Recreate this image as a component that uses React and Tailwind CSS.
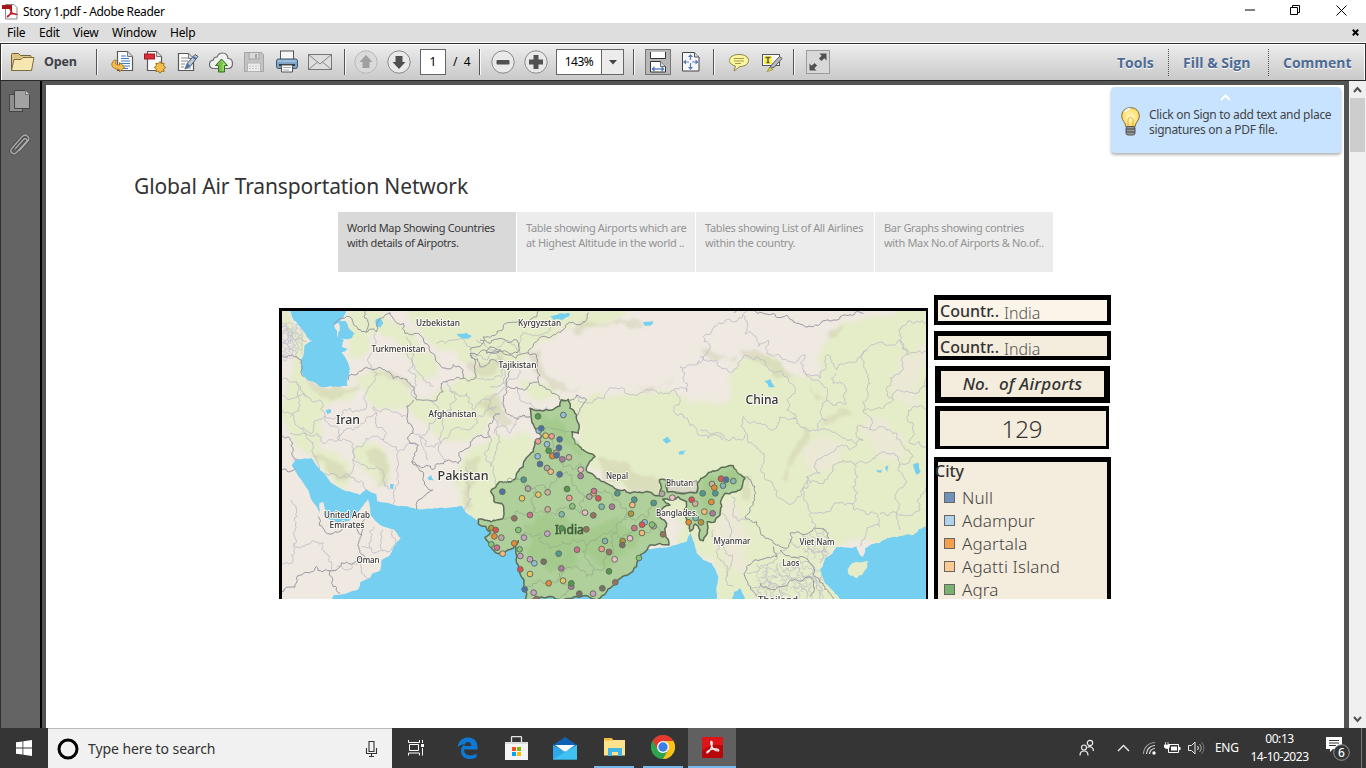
import React from "react";

/* ---------- map geometry helpers ---------- */

function rand(seed) {
  let s = seed % 2147483647;
  return () => {
    s = (s * 48271) % 2147483647;
    return s / 2147483647 - 0.5;
  };
}

// Turns a coarse "x,y x,y" outline into a rough, natural looking border.
function rough(str, amp = 0.3, close = false, dx = 0) {
  const pts = str.trim().split(/\s+/).map((p) => p.split(",").map(Number));
  if (close) pts.push(pts[0]);
  const r = rand(Math.abs(Math.round(pts[0][0] * 37 + pts[0][1] * 91 + pts.length * 13)) + 7);
  const out = [pts[0]];
  const sub = (a, b) => {
    const d = Math.hypot(b[0] - a[0], b[1] - a[1]);
    if (d < 9) {
      out.push(b);
      return;
    }
    const k = r() * amp;
    const m = [(a[0] + b[0]) / 2 - (b[1] - a[1]) * k, (a[1] + b[1]) / 2 + (b[0] - a[0]) * k];
    sub(a, m);
    sub(m, b);
  };
  for (let i = 1; i < pts.length; i++) sub(pts[i - 1], pts[i]);
  return "M" + out.map((p) => (p[0] + dx).toFixed(1) + " " + p[1].toFixed(1)).join("L") + (close ? "Z" : "");
}

const W = 0;
const M = 600;
const E = 1290;

const GREEN = [
  [W, "30,33 60,33 110,110 95,180 110,240 180,270 260,265 240,300 170,320 150,360 160,400 130,440 90,440 60,400 30,330"],
  [W, "240,235 310,205 410,240 430,290 480,300 560,240 600,230 660,200 690,230 690,330 640,400 560,420 440,360 410,330 360,330 290,290"],
  [W, "235,33 330,33 400,80 440,110 480,160 500,230 440,240 410,170 350,110 300,100 280,170 240,180 232,120"],
  [W, "400,33 700,33 700,170 640,200 580,190 540,150 480,130 450,90"],
  [W, "60,390 120,390 150,440 220,480 240,540 220,570 170,520 130,470 70,430"],
  [W, "250,440 320,430 350,470 360,530 330,560 300,520 250,480"],
  [W, "600,450 690,420 700,660 620,660 575,617 560,560 580,480"],
  [M, "0,33 350,33 350,60 280,85 200,130 170,170 100,230 60,290 0,330"],
  [M, "350,33 470,33 430,60 330,80"],
  [M, "150,240 230,250 330,300 480,280 600,270 690,330 690,700 560,600 350,500 330,380 300,300 200,300"],
  [M, "0,440 80,400 180,400 200,430 150,500 110,550 60,570 90,640 90,660 0,660"],
  [E, "420,70 600,33 720,0 720,690 540,740 400,740 360,800 420,940 60,940 40,780 -60,760 -60,330 90,290 110,190 200,170 260,220 360,230 370,130"],
];
const PALE = [
  [E, "300,440 400,420 450,440 400,500 330,510"],
  [E, "500,350 590,400 620,470 560,480 500,410"],
  [E, "600,170 680,130 680,330 600,300 580,240"],
  [E, "60,600 110,620 150,700 130,820 80,790 40,690"],
];
const HILL = [
  [W, "110,225 160,260 235,270 270,262 215,290 180,300 130,270"],
  [W, "290,455 330,450 355,500 350,560 320,560 330,510"],
  [W, "590,480 630,470 620,520 600,570 605,610 590,630 585,560"],
  [W, "290,210 360,205 400,235 425,270 380,240 320,225"],
  [W, "590,190 690,150 690,200 620,225"],
  [W, "640,300 690,290 690,330 650,335"],
  [W, "130,470 180,480 240,530 220,545 170,510"],
  [M, "170,160 210,150 220,200 260,240 330,260 300,275 240,260 200,220"],
  [M, "300,90 350,60 450,55 520,80 480,85 400,75 330,105"],
  [M, "40,300 100,330 130,370 110,380 60,350 20,310"],
  [M, "380,475 480,500 570,545 565,585 470,570 400,540"],
  [M, "500,250 560,260 610,235 600,255 540,275"],
  [E, "120,150 190,160 280,225 270,235 200,200 140,175"],
  [E, "310,380 328,400 322,430 290,470 265,540 255,550 262,490 290,440"],
  [E, "0,145 60,170 110,165 100,185 40,180"],
  [E, "330,250 380,300 350,300"],
  [E, "385,350 450,335 480,350 410,360 370,380"],
  [E, "130,540 155,530 150,600 135,600"],
  [E, "380,105 430,75 410,110"],
];
const SEA = [
  [W, "60,33 70,10 228,10 228,33 192,75 203,110 222,120 216,140 234,146 214,158 228,176 232,258 165,262 100,230 92,180 105,135 130,124 110,110 85,75"],
  [W, "205,66 225,62 238,88 255,100 245,115 205,113"],
  [W, "65,498 80,478 125,475 150,510 180,545 225,572 270,585 290,568 318,582 322,604 370,615 445,628 575,617 590,640 625,662 780,680 1000,760 1200,740 1250,725 1262,698 1280,760 1300,780 1325,790 1345,830 1340,900 1340,1250 185,1250 185,900 192,885 265,868 272,845 300,835 308,820 330,812 335,780 358,768 392,715 370,688 330,675 302,645 294,598 270,630 238,662 205,670 168,655 160,605 148,610 150,640 128,605 115,570 95,540"],
  [E, "95,897 103,875 120,865 135,897 135,920 95,920"],
  [E, "700,672 680,675 640,705 590,712 540,728 495,745 490,770 480,765 470,740 410,740 375,775 360,810 375,850 425,900 430,1100 700,1100"],
  [W, "318,58 330,54 340,68 332,82 320,80"],
  [W, "560,102 590,98 606,108 590,116 565,108"],
  [W, "167,330 180,326 183,338 172,343"],
  [W, "472,535 483,525 492,542 478,541"],
  [W, "360,553 372,552 370,568 362,566"],
  [M, "240,48 298,39 300,47 275,60 250,60"],
  [M, "518,68 548,62 547,73 525,78"],
  [M, "578,420 592,410 604,424 590,431"],
  [M, "626,456 648,451 640,464 628,464"],
  [E, "193,243 210,238 225,262 205,260"],
  [E, "528,512 546,510 543,518"],
  [E, "555,502 565,496 562,516"],
  [E, "640,492 655,488 662,515 650,524"],
];
const THIN = [
  [W, "30,80 60,90 80,120 110,125"],
  [W, "30,130 70,150 90,190"],
  [W, "30,240 80,245 110,290 150,300 165,350 120,400 90,385 60,340 30,320"],
  [W, "80,250 90,300 60,350"],
  [W, "110,290 60,300 30,285"],
  [W, "165,350 215,345 240,325 290,320 310,205"],
  [W, "90,385 140,400 165,430 205,420 200,380 165,350"],
  [W, "205,420 215,400 280,370 320,340 310,320 360,330 410,350"],
  [W, "205,420 250,450 250,500 220,530 160,520 130,440 60,400"],
  [W, "250,450 340,420 385,455 385,490 375,560 370,615"],
  [W, "385,455 440,430"],
  [W, "320,340 350,400 340,420"],
  [W, "220,530 280,560 300,580"],
  [W, "360,570 320,500 250,450"],
  [W, "315,100 320,150 305,205"],
  [W, "410,110 425,180 440,300"],
  [W, "410,150 490,260"],
  [W, "430,400 470,440 540,400 600,390 620,350 680,320"],
  [W, "480,300 500,350 470,400 475,480"],
  [W, "540,270 545,330 520,380 530,480"],
  [W, "530,240 590,280 610,330 660,300"],
  [W, "500,130 550,120 600,140 620,170"],
  [W, "585,630 600,560 590,500"],
  [W, "65,600 70,700 65,790 30,800"],
  [W, "70,730 160,730 185,790 190,810"],
  [W, "275,740 355,755 365,690"],
  [W, "310,680 305,745"],
  [W, "340,690 338,750"],
  [W, "200,800 270,790 300,835"],
  [W, "70,480 90,520 150,630"],
  [M, "20,120 60,150 100,130 150,160 170,100 250,80"],
  [M, "10,160 50,180 80,160 110,200 60,240 10,230"],
  [M, "100,200 110,260 60,300 80,380 70,400"],
  [M, "140,260 150,290 190,320 230,320"],
  [M, "60,260 110,250 150,210"],
  [M, "320,290 370,305 480,285 550,270 610,270"],
  [M, "610,270 650,275 640,230 630,200 690,180"],
  [M, "610,270 615,340 680,385 760,420"],
  [M, "680,190 700,110 760,70 830,33"],
  [M, "60,410 70,500 80,560"],
  [M, "180,350 120,400 90,380 80,440 60,500"],
  [E, "130,45 135,100 175,140 205,120 215,165 270,185 315,165 310,210 360,235 385,165 410,210 440,190 500,150 600,120 605,80 650,65 680,70"],
  [E, "0,170 60,200 110,205 130,170 190,180 260,230 285,280 260,330 290,350 240,350 220,390 150,370 130,350 140,400 120,420 60,400 0,390"],
  [E, "310,210 350,240 380,300 440,310 440,270 400,250 405,220"],
  [E, "500,150 510,250 490,330 580,300 600,120"],
  [E, "490,330 510,390 470,380 490,420 440,420 390,390 350,390 280,350"],
  [E, "510,390 590,400 620,450 640,470 600,495"],
  [E, "380,300 380,360 350,390"],
  [E, "580,300 590,270 650,280 680,230"],
  [E, "600,120 630,160 680,155"],
  [E, "620,350 640,320 680,330"],
  [E, "620,350 640,390 630,430 680,440"],
  [E, "140,400 170,440 180,510 215,545 250,600 300,590 320,530 360,520 350,480 390,460 450,450 470,430"],
  [E, "320,530 330,550 460,490 600,490 610,530 585,590 590,640"],
  [E, "460,490 465,540 450,610 340,640 310,600 325,540"],
  [E, "450,610 530,640 540,680 480,740"],
  [E, "590,640 660,630 670,580 680,560"],
  [E, "540,640 590,640 600,690"],
  [E, "330,640 345,690 380,690"],
  [E, "60,640 90,680 70,740 90,800 100,860"],
  [E, "95,590 100,650 140,660"],
  [E, "40,690 50,760 80,830"],
  [E, "140,820 180,800 220,790 260,750"],
  [E, "150,860 200,840 240,860 250,897"],
  [E, "200,800 210,850 190,897"],
  [E, "230,790 250,830 300,850 320,897"],
  [E, "260,810 290,800 310,830 350,850 360,897"],
  [E, "265,720 300,740 310,710 360,720 380,760"],
  [E, "320,730 340,760 370,750 360,790"],
  [E, "280,770 330,790 345,820"],
];
const THICK = [
  [W, "192,75 215,55 245,55 275,95 320,95 330,55 360,38 400,70 405,100 450,105 480,155 580,210 580,235 550,240 520,245 520,275 470,300 440,300 430,260 400,235 350,215 300,205 235,240"],
  [W, "430,300 412,345 420,430 445,435 425,485 450,500 520,492 565,490 570,455 600,440 610,415 660,410 670,350 690,340"],
  [W, "425,485 460,530 470,560 488,570 445,600 440,628"],
  [W, "580,235 615,235 615,180 600,160 640,150 690,150"],
  [W, "30,170 80,170 100,230"],
  [W, "30,400 60,415 65,460 80,478"],
  [W, "30,510 60,515 75,505"],
  [W, "30,880 100,820 180,812 285,775 275,705 165,695 145,650"],
  [W, "180,812 210,880"],
  [W, "275,705 278,665 295,640"],
  [W, "286,33 288,95"],
  [M, "0,150 30,140 40,110 100,75 170,70 200,50 330,33"],
  [M, "355,38 345,65 280,90 200,125 175,160 200,165 210,225 205,245 115,260 100,300 110,340 180,350"],
  [M, "30,120 60,130 90,115 130,120 150,150 110,155 60,140 50,160 100,160 175,160"],
  [M, "205,245 240,270 270,300 320,285 350,300 325,345"],
  [M, "110,260 115,200 90,190 60,180 30,200 0,165"],
  [E, "103,38 200,42 260,45 290,70 340,80 400,60 490,40"],
  [E, "130,530 165,560 165,600 135,650 170,665 180,690 220,730 260,745 270,700 310,705 350,685 385,700 390,735"],
  [E, "220,740 230,770 180,780 140,800 135,830 170,890"],
  [E, "240,750 300,770 340,800 340,820 390,880 400,897"],
  [E, "180,850 240,860 270,840 330,830 340,860 330,890"],
];
const INDIA =
  "180,325 230,328 270,318 275,300 295,298 300,325 320,345 325,400 305,395 315,430 375,470 350,515 410,550 480,580 570,588 568,540 588,540 592,576 620,580 680,578 682,552 710,525 750,505 790,497 800,515 825,535 815,565 765,580 755,620 735,665 712,665 712,690 700,722 690,720 690,690 675,672 660,694 650,660 640,640 650,605 625,590 605,600 578,598 600,615 565,632 590,670 597,735 540,735 500,800 440,850 410,875 380,900 168,900 150,820 145,722 130,745 98,768 62,740 45,712 62,698 25,672 25,658 100,655 95,610 72,605 62,575 90,545 130,540 160,500 165,480 190,455 195,425 215,410 200,392 185,360";
const STATES = [
  "200,395 240,385 280,395 300,395",
  "215,410 250,440 280,500 330,490 350,515",
  "90,545 180,560 240,560 270,520 280,500",
  "180,560 190,620 230,640 280,625 330,640 350,590 320,560 270,520",
  "100,655 190,620",
  "145,700 210,700 260,740 350,735 400,700 440,700 470,640 430,600 350,590",
  "470,640 540,640 560,600",
  "440,700 500,690 580,700",
  "350,735 370,800 350,830 280,810 200,850 160,860",
  "440,700 430,760 370,810",
  "280,810 300,860 260,897",
];

const C = {
  b: "#4a74a8", l: "#8fbedb", o: "#ea8a32", p: "#f5b97a", g: "#4f9c47", h: "#83c773", y: "#b09a33", w: "#e9c75c",
  t: "#4c9a90", a: "#80b8b0", r: "#dc5352", s: "#f39a90", d: "#7b7067", e: "#b3a9a2", k: "#d16f8c", i: "#eebccb",
  v: "#ab7a9e", u: "#c9a2c5", n: "#98725c", m: "#ceb09b",
};
const DOTS =
  "204,349,g 280,345,l 206,392,l 214,385,b 227,407,w 245,409,s 269,418,b 204,424,s 231,433,l 267,443,b 236,452,g 259,458,e 247,468,o 260,466,b 203,469,l 277,478,v 297,472,m 210,492,b 231,504,e 242,515,p 269,523,b 332,509,i 332,528,v 161,539,t 97,575,b 174,566,e 205,584,w 156,595,w 233,577,m 291,567,g 298,594,s 371,580,p 372,573,k 358,590,e 385,595,r 442,580,t 307,619,h 395,620,a 426,620,v 493,599,t 487,615,p 551,609,t 483,641,y 233,628,m 275,643,a 345,638,i 370,646,n 180,645,k 133,655,n 64,684,y 77,690,r 73,709,o 94,713,e 145,690,h 64,733,h 81,743,k 98,761,p 133,730,o 162,713,u 232,701,u 275,685,g 349,688,n 493,684,k 524,667,l 516,674,r 551,679,e 546,674,h 516,699,p 579,703,n 480,715,i 405,723,a 458,723,y 457,735,d 395,747,s 417,756,n 434,778,i 507,774,h 417,814,g 436,847,n 397,865,d 369,881,u 328,881,d 304,860,v 304,850,g 279,842,w 236,850,o 274,805,v 266,761,t 321,749,k 221,785,d 193,790,l 180,778,u 149,748,h 151,768,u 151,808,r 180,822,w 164,868,b 191,878,u 200,897,n 576,581,e 607,593,i 665,599,r 676,611,m 698,580,t 703,635,p 677,654,a 656,667,o 693,667,y 753,536,r 768,539,b 790,543,a 726,552,m 733,563,o 759,557,a 736,580,t 724,606,o 728,640,v".split(" ").map((s) => s.split(","));

const LABELS = [
  ["Uzbekistan", 438, 326, 44, 8.5], ["Kyrgyzstan", 539.5, 326, 43, 8.5], ["Turkmenistan", 398.5, 352, 54, 8.5],
  ["Tajikistan", 517.5, 367.5, 38, 8.5], ["Afghanistan", 452.5, 417, 48, 8.5], ["Iran", 348, 424, 24, 12.5],
  ["Pakistan", 463, 479.5, 51, 12], ["China", 762, 404, 33, 12.5], ["Nepal", 617, 479, 22, 8.5],
  ["Bhutan", 679.5, 486, 27, 8.5], ["Banglades.", 677, 516, 42, 8.5], ["United Arab", 347, 517.5, 46, 8.5],
  ["Emirates", 347, 527.5, 35, 8.5], ["Oman", 368, 563, 23, 8.5], ["Myanmar", 732, 544, 37, 8.5],
  ["Viet Nam", 817, 545, 35, 8.5], ["Laos", 791, 566, 17, 8.5], ["Thailand", 778, 603, 40, 8.5],
];

function MapView() {
  return (
    <svg className="block h-[288px] w-[644px]" viewBox="282 311 644 288">
      <rect x="280" y="310" width="650" height="290" fill="#efe9e2" />
      <defs>
        <filter id="soft"><feGaussianBlur stdDeviation="7" /></filter>
        <filter id="soft2"><feGaussianBlur stdDeviation="3" /></filter>
      </defs>
      <g transform="translate(270 300) scale(.33333)">
        <g filter="url(#soft)">
          {GREEN.map(([o, s], i) => <path key={i} d={rough(s, 0.4, true, o)} fill="#e5ecc8" />)}
          {PALE.map(([o, s], i) => <path key={i} d={rough(s, 0.5, true, o)} fill="#ebe9d6" />)}
        </g>
        <g filter="url(#soft2)">
          {HILL.map(([o, s], i) => <path key={i} d={rough(s, 0.5, true, o)} fill="#cbcba6" opacity=".42" />)}
        </g>
        <g fill="none" stroke="#bdbdc6" strokeWidth="2.500">
          {THIN.map(([o, s], i) => <path key={i} d={rough(s, 0.6, false, o)} />)}
        </g>
        <g fill="none" stroke="#c3c1cb" strokeWidth="2">
          {Array.from({ length: 26 }, (_, i) => (
            <path key={i} d={rough(`${36 + (i % 4) * 17},${70 + Math.floor(i / 4) * 14} ${55 + (i % 4) * 14},${84 + Math.floor(i / 4) * 15} ${40 + (i % 4) * 18},${98 + Math.floor(i / 4) * 13}`, 1.3)} />
          ))}
          {Array.from({ length: 24 }, (_, i) => (
            <path key={i} d={rough(`${170 + (i % 6) * 34},${790 + Math.floor(i / 6) * 26} ${198 + (i % 6) * 34},${806 + Math.floor(i / 6) * 26} ${184 + (i % 6) * 36},${834 + Math.floor(i / 6) * 26}`, 1, false, E)} />
          ))}
          {Array.from({ length: 12 }, (_, i) => (
            <path key={i} d={rough(`${310 + (i % 4) * 20},${700 + Math.floor(i / 4) * 22} ${326 + (i % 4) * 20},${715 + Math.floor(i / 4) * 22} ${318 + (i % 4) * 20},${738 + Math.floor(i / 4) * 20}`, 1, false, E)} />
          ))}
        </g>
        {SEA.map(([o, s], i) => <path key={i} d={rough(s, i === 2 ? 0.12 : 0.25, true, o)} fill="#74cff0" />)}
        <path d={rough("445,805 470,785 505,783 500,805 470,835 448,825", 0.3, true, E)} fill="#e5ecc8" />
        <g fill="none" stroke="#9796a0" strokeWidth="3">
          {THICK.map(([o, s], i) => <path key={i} d={rough(s, 0.5, false, o)} />)}
        </g>
        <path d={rough("592,542 680,542 680,577 592,577", 0.2, true, M)} fill="#d9d8c5" stroke="#8d8d86" strokeWidth="3" />
        <path d={rough(INDIA, 0.3, true, M)} fill="#afcf9b" stroke="#5c6e57" strokeWidth="4.500" strokeLinejoin="round" />
        <g filter="url(#soft2)" fill="#9cc782" opacity=".5">
          <path d={rough("205,340 260,350 290,390 350,460 330,470 270,410 210,380", 0.5, true, M)} />
          <path d={rough("160,680 230,640 330,690 440,650 520,700 430,800 330,760 240,820 170,780", 0.5, true, M)} />
          <path d={rough("700,540 790,505 810,540 740,570 715,660 695,640", 0.4, true, M)} />
        </g>
        <g fill="none" stroke="#94ae8a" strokeWidth="2.400">
          {STATES.map((s, i) => <path key={i} d={rough(s, 0.8, false, M)} />)}
        </g>
        <text x="898" y="703" textAnchor="middle" textLength="88" lengthAdjust="spacingAndGlyphs" fill="#3d5a38" stroke="#3d5a38" strokeWidth="1.500" fontSize="36" fontFamily="Noto Sans, sans-serif">India</text>
        {DOTS.map(([x, y, c], i) => (
          <circle key={i} cx={+x + M} cy={y} r="8.600" fill={C[c]} stroke="#656c62" strokeWidth="3" />
        ))}
      </g>
      <g fontFamily="Noto Sans, sans-serif" textAnchor="middle" fill="#333338" stroke="#fbf8f2" strokeWidth="2" strokeLinejoin="round" className="font-medium">
        {LABELS.map(([t, x, y, w, s]) => (
          <text key={t} x={x} y={y} fontSize={s} textLength={w} lengthAdjust="spacingAndGlyphs" paintOrder="stroke">{t}</text>
        ))}
      </g>
    </svg>
  );
}

/* ---------- toolbar icons ---------- */

function Ic({ children, w = 26, h = 26 }) {
  return <svg width={w} height={h} viewBox={`0 0 ${w} ${h}`} className="block shrink-0">{children}</svg>;
}
function Cell({ children, wide }) {
  return <div className={wide ? "flex w-10 shrink-0 justify-center" : "flex w-[33px] shrink-0 justify-center"}>{children}</div>;
}
function Sep({ className }) {
  return <div className={"h-[26px] w-[2px] shrink-0 border-l border-[#555] bg-[#f8f8f8] " + className} />;
}
const Page = ({ x = 7, y = 2, w = 15, h = 20 }) => (
  <>
    <path d={`M${x} ${y}h${w - 5}l5 5v${h - 5}h-${w}z`} fill="#fcfcfc" stroke="#585858" strokeWidth="1.2" />
    <path d={`M${x + w - 5} ${y}v5h5`} fill="#d9d9d9" stroke="#777" />
  </>
);
const Folder = () => (
  <Ic>
    <path d="M2.500 21.500V5.500q0-1 1-1h6l2 2h9.500q1 0 1 1V21.500z" fill="#dcc584" stroke="#6f6234" />
    <path d="M2.500 21.500L5 10.500h7l2-2h11L22.500 21.500z" fill="#f6e7b2" stroke="#7d6d3a" />
  </Ic>
);
const Convert = () => (
  <Ic>
    <Page x={8.500} y={2.500} w={15} h={19} />
    <path d="M12 7h5M12 9.500h8M12 12h9M12 14.500h9M13 17h8M14 19.500h5" stroke="#3f7fc6" strokeWidth="1.200" />
    <path d="M5.500 11c-5 4-3 9 5 9.500v2.500l5-5-5-4.500v2.500c-4 0-5-2-3-4.500z" fill="#f5bd4b" stroke="#a8741d" />
  </Ic>
);
const CreatePdf = () => (
  <Ic>
    <Page x={5.500} y={2.500} w={14} h={19} />
    <rect x="2.500" y="5" width="10" height="5" fill="#dc2c38" stroke="#a01c25" />
    <path d="M18 12.500l1.500 2.200 2.600-.5-.5 2.600 2.200 1.700-2.200 1.500.5 2.600-2.600-.5-1.500 2.200-1.500-2.200-2.600.5.5-2.600-2.200-1.500 2.200-1.700-.5-2.600 2.600.5z" fill="#f2bf4d" stroke="#a8741d" />
  </Ic>
);
const Sign = () => (
  <Ic>
    <Page x={3.500} y={4.500} w={15} h={17} />
    <path d="M6 9h7M6 12h7M6 15h4M6 18h3M12 19h4" stroke="#8a8a8a" strokeWidth="1.200" />
    <path d="M10 20l2.500-6L20 5.500l3 2L15.500 17z" fill="#b9c9d8" stroke="#4c5a68" />
    <path d="M10 20l2.500-6 3 3z" fill="#4978b0" /><path d="M18 8l3 2" stroke="#44729f" strokeWidth="2" />
  </Ic>
);
const Cloud = () => (
  <Ic>
    <path d="M6 19.500q-4.500 0-4.500-4t4-4.500q0-3 3.500-3 1.500-4 5.500-4 5 0 5.500 5.500 4.500 0 4.500 5t-4.500 5z" fill="#f0f0f0" stroke="#6a6a6a" strokeWidth="1.200" />
    <path d="M13.500 10l6 6.500h-3v6.500h-6v-6.500h-3z" fill="#78bf47" stroke="#356f1d" /><path d="M13.500 12l3.500 3.500h-2v6.500" stroke="#b9e595" fill="none" />
  </Ic>
);
const Save = () => (
  <Ic>
    <path d="M3.500 3.500h17l2 2v17h-19z" fill="#c4c4c4" stroke="#a4a4a4" />
    <rect x="8" y="3.500" width="10" height="6.500" fill="#dadada" stroke="#a4a4a4" /><rect x="14" y="5" width="2" height="4" fill="#a4a4a4" />
    <rect x="6.500" y="14" width="13" height="8.500" fill="#ececec" stroke="#b4b4b4" /><path d="M8 17h10M8 19.500h10" stroke="#c4c4c4" strokeDasharray="2 1" />
  </Ic>
);
const Print = () => (
  <Ic>
    <rect x="6.500" y="2" width="13" height="8.500" fill="#f6f6f6" stroke="#555" />
    <rect x="2.500" y="10" width="21" height="9.500" rx="2" fill="#7fa6c8" stroke="#39566f" />
    <path d="M3.500 12h19" stroke="#bcd7ee" /><path d="M5 16h16" stroke="#2f3c48" strokeWidth="2" />
    <path d="M7.500 16h11v7h-11z" fill="#fff" stroke="#555" /><path d="M9 18.500h8M9 21h6" stroke="#aaa" />
  </Ic>
);
const Mail = () => (
  <Ic>
    <rect x="1.500" y="5.500" width="23" height="15" fill="#dedede" stroke="#777" />
    <path d="M2 6l11 9 11-9M2 20l8.500-7M24 20l-8.500-7" fill="none" stroke="#858585" />
  </Ic>
);
const Round = ({ dim, children }) => (
  <Ic>
    <circle cx="13" cy="13" r="11.200" fill={dim ? "#dadada" : "#e9e9e9"} stroke={dim ? "#b9b9b9" : "#8a8a8a"} />
    <g fill={dim ? "#a0a0a0" : "#505050"}>{children}</g>
  </Ic>
);

function Toolbar() {
  return (
    <div className="flex h-[37px] shrink-0 items-center border-x border-b border-[#2c2c2c] border-b-[#2a2a2a] bg-linear-to-b from-[#ededed] to-[#c9c9c9] shadow-[inset_0_1px_0_#fff,inset_1px_0_0_#fff,inset_-1px_0_0_#fff]">
      <div className="ml-[8px] flex items-center"><Folder /></div>
      <span className="ml-[9px] w-[52px] font-['Open_Sans'] text-[12.500px] font-bold tracking-[-0.150px] text-[#3c4146]">Open</span>
      <Sep className="" />
      <div className="ml-[7px] flex">
        <Cell><Convert /></Cell><Cell><CreatePdf /></Cell><Cell><Sign /></Cell><Cell><Cloud /></Cell>
        <Cell><Save /></Cell><Cell><Print /></Cell><Cell><Mail /></Cell>
      </div>
      <Sep className="ml-[8px]" />
      <div className="ml-[3px] flex">
        <Cell><Round dim><path d="M13 6l6.500 7h-3v6h-7v-6h-3z" /></Round></Cell>
        <Cell><Round><path d="M13 20l6.500-7h-3V7h-7v6h-3z" /></Round></Cell>
      </div>
      <div className="ml-[5px] flex h-[26px] w-[26px] shrink-0 items-center justify-center border border-[#666] bg-white font-['Noto_Sans'] text-xs text-black">1</div>
      <span className="w-[33px] pl-[7px] font-['Noto_Sans'] text-xs whitespace-pre text-black">/  4</span>
      <Sep className="" />
      <div className="ml-[5px] flex">
        <Cell><Round><rect x="6.500" y="11" width="13" height="4.500" rx="1" /></Round></Cell>
        <Cell><Round><path d="M10.500 6h5v4.500H20v5h-4.500V20h-5v-4.500H6v-5h4.500z" /></Round></Cell>
      </div>
      <div className="ml-[4px] flex h-[26px] w-[68px] shrink-0 border border-[#666] bg-white">
        <span className="flex w-[45px] items-center justify-center border-r border-[#666] font-['Noto_Sans'] text-xs tracking-[-0.500px] text-black">143%</span>
        <span className="flex flex-1 items-center justify-center bg-[#ececec]"><svg width="8" height="5"><path d="M0 0h8L4 4.500z" fill="#444" /></svg></span>
      </div>
      <Sep className="ml-[9px]" />
      <div className="ml-[10px] flex h-[26px] w-[26px] shrink-0 items-center justify-center border border-[#777] bg-[#b7b7b7]">
        <Ic w={24} h={24}>
          <path d="M4.500 2v6.500h15V2" fill="#fff" stroke="#333" /><path d="M4.500 22V11.500h10l5 5V22z" fill="#fff" stroke="#333" /><path d="M14.500 11.500v5h5" fill="#ddd" stroke="#666" />
          <path d="M7 19h10" stroke="#4f74b8" strokeWidth="1.300" /><path d="M5.500 19l3-3v6zM18.500 19l-3-3v6z" fill="#4f74b8" />
        </Ic>
      </div>
      <Cell wide>
        <Ic>
          <path d="M4.500 3.500h12l4.500 4.500v14H4.500z" fill="#f7f7f7" stroke="#444" /><path d="M16.500 3.500v4.500h4.500" fill="#ddd" stroke="#555" />
          <path d="M12.500 6v14M6 13h13" stroke="#5a7cbc" strokeWidth="1.200" strokeDasharray="5 3" />
          <path d="M12.500 5l2.500 3h-5zM12.500 21l2.500-3h-5zM5 13l3-2.500v5zM20.500 13l-3-2.500v5z" fill="#5a7cbc" />
        </Ic>
      </Cell>
      <Sep className="ml-[2px]" />
      <div className="ml-[7px] flex">
        <Cell><Ic>
          <path d="M13 5.500c6 0 9.500 2.500 9.500 6S19 17.500 14 17.500l-6 4.500 1.500-5C6 16 3.500 14.500 3.500 11.500 3.500 8 7 5.500 13 5.500z" fill="#fdf6a0" stroke="#8c864c" />
          <path d="M8 9.500h10M8 12h10M9 14.500h6" stroke="#a59a4a" />
        </Ic></Cell>
        <Cell><Ic>
          <rect x="3.500" y="5.500" width="17" height="11" fill="#f7f7f7" stroke="#555" /><rect x="5" y="7" width="8" height="8" fill="#fff147" />
          <path d="M6.500 8.500h5M9 8.500v5.500M7.500 13.500h3" stroke="#555" strokeWidth="1.400" />
          <path d="M10 20l2.500-4 8-8.500 2.500 2-7.500 8.500z" fill="#b9b9b9" stroke="#555" /><path d="M8 22.500l3-4 3 2z" fill="#eee13c" stroke="#888230" strokeWidth=".7" />
        </Ic></Cell>
      </div>
      <Sep className="ml-[5px]" />
      <div className="ml-[11px] flex h-6 w-6 shrink-0 items-center justify-center border border-[#9b9b9b] bg-[#d8d8d8]">
        <svg width="22" height="22"><path d="M19.500 2.500v7L17.300 7.300l-2.800 2.800-2.600-2.600 2.800-2.800L12.500 2.500zM2.500 19.500v-7l2.200 2.200 2.800-2.800 2.600 2.600-2.800 2.800 2.200 2.200z" fill="#505050" /></svg>
      </div>
      <div className="ml-auto flex items-center pr-[13px] font-['Open_Sans'] text-[14px] font-bold text-[#4d6b95] [text-shadow:0_1px_0_#fff]">
        <span className="w-[51px]">Tools</span>
        <span className="h-[27px] border-l border-dotted border-[#555]" />
        <span className="w-[99px] pl-[14px] whitespace-nowrap">Fill &amp; Sign</span>
        <span className="h-[27px] border-l border-dotted border-[#555]" />
        <span className="w-[83px] pl-[14px]">Comment</span>
      </div>
    </div>
  );
}

/* ---------- document ---------- */

const STORY = [
  ["World Map Showing Countries", "with details of Airpotrs."],
  ["Table showing Airports which are", "at Highest Altitude in the world .."],
  ["Tables showing List of All Airlines", "within the country."],
  ["Bar Graphs showing contries", "with Max No.of Airports & No.of.."],
];
const CITIES = [
  ["Null", "bg-[#6e92bb]"], ["Adampur", "bg-[#b0d3ec]"], ["Agartala", "bg-[#f6a04e]"], ["Agatti Island", "bg-[#ffc992]"], ["Agra", "bg-[#78b271]"],
];

function Filter({ className }) {
  return (
    <div className={"flex w-[177px] shrink-0 overflow-hidden border-4 border-t-[5px] border-black pl-[2px] text-[#333] " + className}>
      <span className="w-[64px] text-[16px] leading-[22px] font-medium">Countr..</span>
      <span className="h-[19px] overflow-hidden text-[16px] leading-[27px] font-light text-[#555]">India</span>
    </div>
  );
}

function Document() {
  return (
    <div className="relative mt-[4px] flex w-[1298px] shrink-0 flex-col bg-white font-['Noto_Sans']">
      <h1 className="mt-[86px] ml-[88px] h-[41px] text-[21px] leading-[30px] tracking-[-0.120px] text-[#333]">Global Air Transportation Network</h1>
      <div className="ml-[292px] flex gap-px text-[11px] leading-[15px]">
        {STORY.map(([a, b], i) => (
          <div key={a} className={"h-[60px] w-[178px] pt-[8px] pl-[9px] tracking-[-0.330px] whitespace-nowrap " + (i ? "bg-[#ececec] text-[#949494]" : "bg-[#d9d9d9] text-[#3a3a3a]")}>
            {a}<br />{b}
          </div>
        ))}
      </div>
      <div className="mt-[23px] ml-[233px] flex h-[304px] overflow-hidden">
        <div className="mt-[13px] h-[291px] w-[649px] overflow-hidden border-t-[3px] border-r-2 border-l-[3px] border-black"><MapView /></div>
        <div className="ml-[6px] flex w-[177px] flex-col">
          <Filter className="h-[30px] bg-[#fbf4e8]" />
          <Filter className="mt-[6px] h-[29px] bg-[#f4ecdc]" />
          <div className="mt-[6px] ml-px flex h-[37px] w-[175px] shrink-0 items-center justify-center border-[5px] border-x-[6px] border-b-[6px] border-black bg-[#f4ecdc] text-[17px] font-medium tracking-[0.200px] whitespace-pre text-[#333] italic">No.  of Airports</div>
          <div className="mt-[3px] ml-px flex h-[43px] w-[174px] shrink-0 items-center justify-center border-[5px] border-r-[3px] border-b-[3px] border-black bg-[#f4ecdc] pr-[2px] text-[24px] font-light text-[#333]">129</div>
          <div className="mt-[8px] h-[142px] w-[177px] shrink-0 border-x-4 border-t-[5px] border-black bg-[#f4ecdc] text-[#333]">
            <div className="-ml-[3px] h-[24px] text-[16px] leading-[19px] font-medium">City</div>
            {CITIES.map(([n, c]) => (
              <div key={n} className="flex h-[23px] items-center pl-[6px]">
                <span className={"h-[11px] w-[11px] border border-[#666] " + c} />
                <span className="ml-[7px] text-[17px] leading-[22px] font-light tracking-[0.150px] text-[#444]">{n}</span>
              </div>
            ))}
          </div>
        </div>
      </div>
      <div className="absolute top-[2px] right-[3px] flex h-[66px] w-[230px] rounded-[4px] bg-[#c7e3ff] pt-[20px] pl-[10px] shadow-[0_2px_3px_rgba(0,0,0,.3)]">
        <svg className="absolute top-[7px] left-[109px]" width="11" height="7"><path d="M1 6l4.500-4.500L10 6" fill="none" stroke="#fff" strokeWidth="2" /></svg>
        <svg width="19" height="29" viewBox="0 0 19 29">
          <defs><radialGradient id="bulb"><stop offset="0" stopColor="#fffbd0" /><stop offset="1" stopColor="#ffd95c" /></radialGradient></defs>
          <path d="M9.500.7c5.500 0 9 3.800 8.800 8.800-.2 4-4 6-4.300 10.500H5C4.700 15.500.9 13.500.7 9.500.5 4.500 4 .7 9.500.7z" fill="url(#bulb)" stroke="#7d6b3c" />
          <path d="M4 5c1-2 3-3 5-3" stroke="#fff" strokeWidth="2" fill="none" /><path d="M7 12l2.500-2 2.500 2v7M7 12v7" fill="none" stroke="#e9a93c" />
          <rect x="5" y="19.500" width="9" height="8.500" rx="2" fill="#999" stroke="#555" /><path d="M5 22h9M5 25h9" stroke="#444" />
        </svg>
        <p className="ml-[9px] text-[12px] leading-[15px] tracking-[-0.300px] whitespace-nowrap text-[#444]">Click on Sign to add text and place<br />signatures on a PDF file.</p>
      </div>
    </div>
  );
}

/* ---------- taskbar ---------- */

function Acrobat() {
  return (
    <svg width="21" height="21" viewBox="0 0 22 22">
      <rect width="22" height="22" rx="1" fill="#b8080c" /><path d="M0 0h22v9Q12 6 0 14z" fill="#dd1518" />
      <path d="M9.500 4.500c2-.5 1.500 5-1 9-2 3.500-4 4-3.500 2.500.5-1.800 5-3.500 8.500-3.500 4.500 0 5 2 3 2.200-3.500.3-8.500-6-7-10.200z" fill="none" stroke="#fff" strokeWidth="1.200" />
    </svg>
  );
}

function Taskbar() {
  return (
    <div className="flex h-10 shrink-0 items-stretch bg-[#353535] font-['Noto_Sans'] text-white">
      <div className="flex w-12 items-center justify-center">
        <svg width="16" height="16"><path d="M0 2.300L6.500 1.400v6.200H0zM7.300 1.300L16 0v7.600H7.300zM0 8.400h6.500v6.200L0 13.700zM7.300 8.400H16V16l-8.700-1.300z" fill="#fff" /></svg>
      </div>
      <div className="flex w-[344px] items-center border-t border-[#b9b9b9] bg-[#f1f1f1] pl-[9px] text-[#333]">
        <svg width="22" height="22"><circle cx="11" cy="11" r="9" fill="none" stroke="#000" strokeWidth="3" /></svg>
        <span className="ml-[9px] text-[14px] tracking-[-0.080px]">Type here to search</span>
        <svg className="ml-auto mr-[14px]" width="13" height="18"><path d="M4 1.500h5v10H4zM1.500 8v5.500h10V8M6.500 13.500v3M4 16.500h5" fill="none" stroke="#333" strokeWidth="1.100" /></svg>
      </div>
      <div className="flex w-12 items-center justify-center">
        <svg width="17" height="16"><path d="M.5 0v2.500h11V0M1.500 4.500h9v6h-9zM.5 15.500v-2.500h11v2.500M14.500 0v3M14.500 8v7.500" fill="none" stroke="#fff" /><rect x="13" y="4" width="3" height="3" fill="#fff" /></svg>
      </div>
      <div className="flex w-[54px] items-center justify-center">
        <svg width="21" height="22"><path d="M.5 10C2 3 6 .5 11 .5c6 0 9.500 4 9.500 9.500v2.500H7c0 7 8 7 12.500 4v4c-6 3-15.500 2-15.500-6.500 0-3 1.500-5.500 4-7-4 .7-6.500 2-7.500 3zM7.300 9h7C14.300 3.500 7.500 4 7.300 9z" fill="#0e79d5" /></svg>
      </div>
      <div className="flex w-[44px] items-center justify-center">
        <svg width="23" height="24"><path d="M6.500 7V1.500q0-1 1-1h8q1 0 1 1V7" fill="none" stroke="#e5e5e5" strokeWidth="1.300" /><path d="M0 6h23v18H0z" fill="#f5f5f5" /><path d="M0 6h23v2H0z" fill="#ddd" /><path d="M7 11h4v4H7z" fill="#f25022" /><path d="M12 11h4v4h-4z" fill="#7fba00" /><path d="M7 16h4v4H7z" fill="#00a4ef" /><path d="M12 16h4v4h-4z" fill="#ffb900" /></svg>
      </div>
      <div className="flex w-[54px] items-center justify-center">
        <svg width="24" height="23"><path d="M0 8L12 0l12 8v14H0z" fill="#0f62b3" /><path d="M0 8l12 7L24 8v14.500H0z" fill="#2fa8e8" /><path d="M24 8v14.500H0z" fill="#3fc1f2" /><path d="M2 8h20l-9 6.500h-2z" fill="#f5fbff" /></svg>
      </div>
      <div className="ml-[2px] flex w-10 items-center justify-center border-b-2 border-[#76b9ed]">
        <svg width="21" height="18"><path d="M0 1h8l1 1h12v15.500H0z" fill="#ffe28c" /><path d="M0 0h8l1 2.500H0z" fill="#f0b93f" /><path d="M4 18v-8h14v8h-4v-4H8v4z" fill="#42b6e8" /></svg>
      </div>
      <div className="ml-[9px] flex w-10 items-center justify-center border-b-2 border-[#76b9ed]">
        <svg width="24" height="24" viewBox="0 0 24 24"><circle cx="12" cy="12" r="12" fill="#2da44e" /><path d="M12 12L1.600 6A12 12 0 0122.400 6z" fill="#e5392f" /><path d="M12 6h10.400A12 12 0 0112 24l5.200-9z" fill="#fbc116" /><path d="M1.600 6l5.200 9L12 12V6z" fill="#e5392f" /><path d="M1.600 6l5.200 9 5.200 3-2 5.800A12 12 0 011.600 6z" fill="#2da44e" /><circle cx="12" cy="12" r="6" fill="#fff" /><circle cx="12" cy="12" r="4.700" fill="#3d7de8" /></svg>
      </div>
      <div className="ml-[5px] flex w-12 items-center justify-center border-b-2 border-[#76b9ed] bg-[#606060]"><Acrobat /></div>
      <div className="ml-auto flex items-center">
        <svg width="16" height="18" className="mr-[22px]"><g fill="none" stroke="#eee" strokeWidth="1.200"><circle cx="5" cy="8.500" r="2.500" /><path d="M1 16.500c0-6 8-6 8 0" /><circle cx="11" cy="4" r="2.700" /><path d="M8.500 8.500c3-2 6 0 6 3.500" /></g></svg>
        <svg width="13" height="8" className="mr-[12px]"><path d="M1 7l5.500-5.500L12 7" fill="none" stroke="#eee" strokeWidth="1.400" /></svg>
        <svg width="14" height="14" className="mr-[8px]"><g fill="none" strokeWidth="1.200"><path d="M1.500 13A11.500 11.500 0 0113 1.500" stroke="#999" /><path d="M4.500 13A8.500 8.500 0 0113 4.500M7.500 13A5.500 5.500 0 0113 7.500" stroke="#ddd" /></g><circle cx="12" cy="12" r="1.700" fill="#fff" /></svg>
        <svg width="17" height="12" className="mr-[7px]"><path d="M4.500 2.500h10v8h-10z" fill="none" stroke="#fff" /><path d="M7 4.500h6v4H7zM15 5h1.500v3H15z" fill="#fff" /><path d="M1.500 0v3M4 0v3M0 3h5.500v2L4 6.500H2L0 5z" fill="#fff" stroke="#fff" strokeWidth=".7" /></svg>
        <svg width="17" height="14" className="mr-[10px]"><path d="M.5 4.500h3l3.500-3.500v12L3.500 9.500h-3z" fill="none" stroke="#eee" /><path d="M9.500 5q2 2 0 4" fill="none" stroke="#eee" /><path d="M11.500 3q3.500 4 0 8" fill="none" stroke="#aaa" /><path d="M13.500 1q5 6 0 12" fill="none" stroke="#777" /></svg>
        <span className="w-[35px] text-[12px] tracking-[-0.300px]">ENG</span>
        <div className="w-[59px] text-center text-[12px] leading-[18px] tracking-[-0.450px] whitespace-nowrap"><div>00:13</div><div>14-10-2023</div></div>
        <svg width="25" height="25" className="ml-[17px]"><path d="M0 1h16v12H7l-3 3v-3H0z" fill="#fff" /><path d="M3 4.500h10M3 7h10M3 9.500h7" stroke="#353535" /><circle cx="15.500" cy="16.500" r="7.800" fill="#353535" stroke="#999" /><text x="15.500" y="20.800" fontSize="12" fontFamily="Noto Sans" fontWeight="500" textAnchor="middle" fill="#fff">6</text></svg>
        <span className="ml-[10px] h-10 w-[5px] border-l border-[#777]" />
      </div>
    </div>
  );
}

export default function App() {
  return (
    <div className="flex h-[768px] w-[1366px] flex-col overflow-hidden bg-white font-['Noto_Sans',sans-serif]">
      <header className="flex h-[23px] shrink-0 items-center pl-[2px] text-[12px] text-black">
        <svg width="17" height="17"><path d="M3.500 1.500h8.500l3 3v11.500H3.500z" fill="#fff" stroke="#888" /><path d="M0 2h10v4H0z" fill="#a5131b" /><path d="M8.500 5c2 0 1 4-1 7s-3 2-1.500.8 5-2.500 8-1.800-2 1-4-1.500-2.500-4-1.500-4.500z" fill="none" stroke="#b5131b" strokeWidth="1.200" /></svg>
        <span className="ml-[4px] tracking-[-0.370px]">Story 1.pdf - Adobe Reader</span>
        <div className="ml-auto flex items-center pr-[19px] pb-[3px]">
          <svg width="10" height="2"><path d="M0 1h10" stroke="#000" /></svg>
          <svg width="11" height="11" className="ml-[35px]"><path d="M.5 2.500h7v7h-7zM2.500 2.500v-2h7v7h-2" fill="none" stroke="#000" /></svg>
          <svg width="11" height="11" className="ml-[35px]"><path d="M.5.5l10 10M10.500.5l-10 10" stroke="#000" /></svg>
        </div>
      </header>
      <nav className="flex h-[19px] shrink-0 items-center bg-[#dedede] pl-[7px] text-[12px] tracking-[-0.200px] text-black">
        <span className="w-8">File</span><span className="w-[34px]">Edit</span><span className="w-[39px]">View</span><span className="w-[58px]">Window</span><span>Help</span>
        <svg width="7" height="7" className="mr-[7px] ml-auto"><path d="M.8.8l5.400 5.400M6.200.8L.8 6.200" stroke="#000" strokeWidth="2" /></svg>
      </nav>
      <div className="h-[2px] shrink-0 border-t border-b border-t-white border-b-[#2b2b2b]" />
      <Toolbar />
      <main className="flex h-[647px] shrink-0 bg-[#535353]">
        <aside className="flex w-[42px] shrink-0 flex-col items-center border-r-2 border-l border-[#303030] border-r-black bg-[#646464] pt-[8px] pr-[3px]">
          <svg width="22" height="24"><path d="M1.500 5.500h13v17h-13z" fill="#909090" stroke="#444" /><path d="M6.500 1.500h11l4 4v14h-15z" fill="#a2a2a2" stroke="#444" /><path d="M17.500 1.500v4h4" fill="#ccc" stroke="#777" /></svg>
          <svg width="22" height="24" className="mt-[20px]"><path d="M7 16L15.500 6.500c2-2 4.500 0 2.800 2.200L8.500 19.500c-3 3-7.500-.5-4.700-4L14 3.800c3.800-4 9 .5 5.500 4.700L11 18" fill="none" stroke="#484848" strokeWidth="3" /><path d="M7 16L15.500 6.500c2-2 4.500 0 2.800 2.200L8.500 19.500c-3 3-7.500-.5-4.700-4L14 3.800c3.800-4 9 .5 5.500 4.700L11 18" fill="none" stroke="#a8a8a8" strokeWidth="1.500" /></svg>
        </aside>
        <div className="w-[4px] shrink-0" />
        <Document />
        <div className="ml-[5px] flex w-[17px] flex-col items-center bg-[#f0f0f0]">
          <svg width="17" height="17"><path d="M5 11l3.500-4 3.500 4" fill="none" stroke="#505050" strokeWidth="2" /></svg>
          <div className="h-[54px] w-[15px] bg-[#cdcdcd]" />
          <svg width="17" height="17" className="mt-auto"><path d="M5 6l3.500 4L12 6" fill="none" stroke="#505050" strokeWidth="2" /></svg>
        </div>
      </main>
      <Taskbar />
    </div>
  );
}
